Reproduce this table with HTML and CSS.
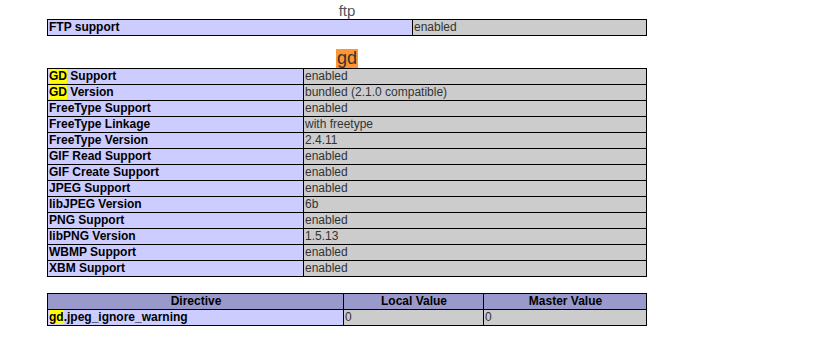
FILE: index.html
```html
<!DOCTYPE html>
<html>
<head>
<meta charset="utf-8">
<link rel="stylesheet" href="styles.css">
</head>
<body>
<div class="page">
  <div class="title title-ftp">ftp</div>
  <table class="info t-ftp">
    <colgroup><col class="c-ftp1"><col></colgroup>
    <tr><td class="e">FTP support</td><td class="v">enabled</td></tr>
  </table>

  <div class="title title-gd"><span class="find-current">gd</span></div>
  <table class="info t-gd">
    <colgroup><col class="c-gd1"><col></colgroup>
    <tr><td class="e"><span class="find">GD</span> Support</td><td class="v">enabled</td></tr>
    <tr><td class="e"><span class="find">GD</span> Version</td><td class="v">bundled (2.1.0 compatible)</td></tr>
    <tr><td class="e">FreeType Support</td><td class="v">enabled</td></tr>
    <tr><td class="e">FreeType Linkage</td><td class="v">with freetype</td></tr>
    <tr><td class="e">FreeType Version</td><td class="v">2.4.11</td></tr>
    <tr><td class="e">GIF Read Support</td><td class="v">enabled</td></tr>
    <tr><td class="e">GIF Create Support</td><td class="v">enabled</td></tr>
    <tr><td class="e">JPEG Support</td><td class="v">enabled</td></tr>
    <tr><td class="e">libJPEG Version</td><td class="v">6b</td></tr>
    <tr><td class="e">PNG Support</td><td class="v">enabled</td></tr>
    <tr><td class="e">libPNG Version</td><td class="v">1.5.13</td></tr>
    <tr><td class="e">WBMP Support</td><td class="v">enabled</td></tr>
    <tr><td class="e">XBM Support</td><td class="v">enabled</td></tr>
  </table>

  <table class="info t-dir">
    <colgroup><col class="c-d1"><col class="c-d2"><col></colgroup>
    <tr class="h"><th>Directive</th><th>Local Value</th><th>Master Value</th></tr>
    <tr><td class="e"><span class="find">gd</span>.jpeg_ignore_warning</td><td class="v">0</td><td class="v">0</td></tr>
  </table>
</div>
</body>
</html>
```

FILE: styles.css
```css
html, body {
  margin: 0;
  padding: 0;
  background: #fff;
}
body {
  font-family: "Liberation Sans", Arial, sans-serif;
  color: #222;
}
.page {
  width: 600px;
  margin-left: 47px;
}
.title {
  text-align: center;
}
.title-ftp {
  height: 19px;
  font-size: 15px;
  line-height: 17px;
  padding-top: 2px;
  box-sizing: border-box;
  color: #555;
}
.title-gd {
  padding-top: 13px;
  height: 32px;
  box-sizing: border-box;
  font-size: 18px;
  line-height: 19px;
  color: #333;
}
.find-current {
  display: inline-block;
  background: #ff9632;
  height: 19px;
  padding: 0 1px;
}
.find {
  background: #ffff00;
}
table.info {
  border-collapse: collapse;
  table-layout: fixed;
  width: 600px;
}
.t-dir {
  margin-top: 16px;
}
.c-ftp1 { width: 365px; }
.c-gd1 { width: 256px; }
.c-d1 { width: 296px; }
.c-d2 { width: 140px; }
td, th {
  border: 1px solid #000;
  height: 15px;
  line-height: 15px;
  padding: 0 0 0 1px;
  font-size: 12px;
  white-space: nowrap;
  overflow: hidden;
  vertical-align: top;
}
.e {
  background: #ccccff;
  font-weight: bold;
  color: #000;
}
.v {
  background: #cccccc;
  color: #333;
}
.h th {
  background: #9999cc;
  font-weight: bold;
  color: #000;
  text-align: center;
}
```
